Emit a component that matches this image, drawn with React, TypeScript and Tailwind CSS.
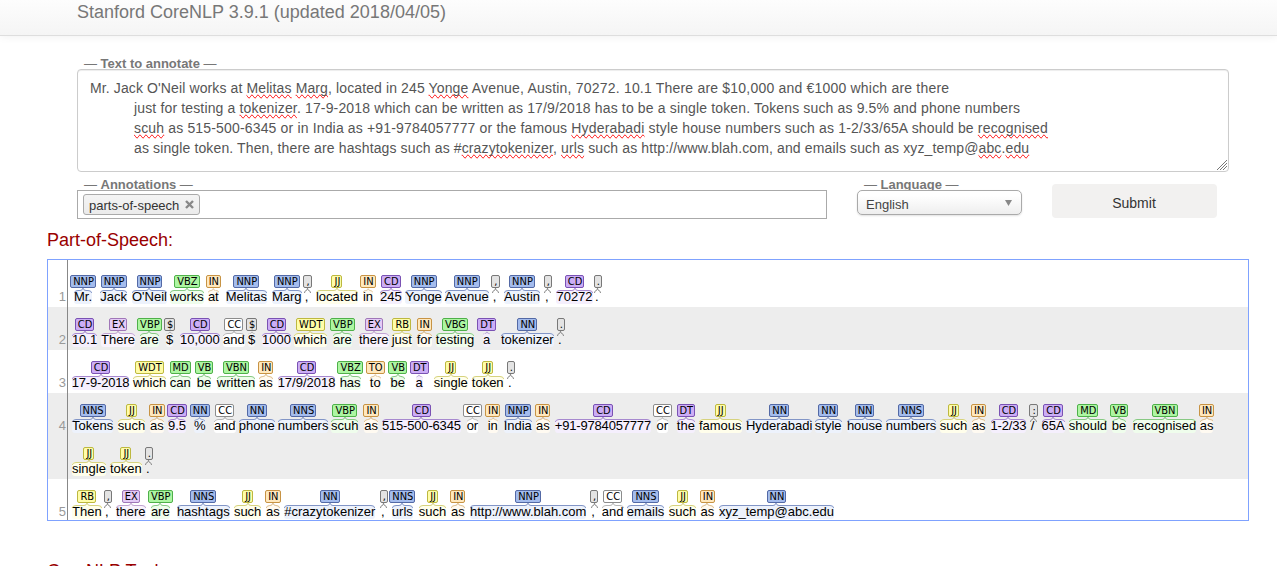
import React from 'react';

type Token = [word: string, tag: string, x: number];

const INK: Record<string, string> = {
  noun: 'bg-[#a4bced] border-[#5369a5]',
  verb: 'bg-[#adf6a2] border-[#4fb04a]',
  adj: 'bg-[#fffda8] border-[#bdb840]',
  prep: 'bg-[#ffe8be] border-[#c79344]',
  num: 'bg-[#ccadf6] border-[#7a52b3]',
  ex: 'bg-[#e4cbf6] border-[#a077b8]',
  conj: 'bg-white border-[#8c8c8c]',
  punct: 'bg-[#e3e3e3] border-[#787878]',
};

const BRACE: Record<string, string> = {
  noun: 'text-[#5f77b5]',
  verb: 'text-[#66b862]',
  adj: 'text-[#c9c45a]',
  prep: 'text-[#d0a667]',
  num: 'text-[#8d68c0]',
  ex: 'text-[#b08ac4]',
  conj: 'text-[#a0a0a0]',
  punct: 'text-[#888888]',
};

const GLOW: Record<string, string> = {
  noun: 'bg-[#edf2fc]',
  verb: 'bg-[#effdec]',
  adj: 'bg-[#fffeeb]',
  prep: 'bg-[#fffaf1]',
  num: 'bg-[#f5effd]',
  ex: 'bg-[#f9f3fd]',
  conj: 'bg-white',
  punct: 'bg-[#f7f7f7]',
};

function kind(tag: string): string {
  if (tag.startsWith('NN')) return 'noun';
  if (tag.startsWith('VB') || tag === 'MD') return 'verb';
  if (tag === 'JJ' || tag === 'RB' || tag === 'WDT') return 'adj';
  if (tag === 'IN' || tag === 'TO') return 'prep';
  if (tag === 'CD' || tag === 'DT') return 'num';
  if (tag === 'EX') return 'ex';
  if (tag === 'CC') return 'conj';
  return 'punct';
}

const LINES: { num: string; shade: boolean; first?: boolean; last?: boolean; tokens: Token[] }[] = [
  {
    num: '1', shade: false, first: true,
    tokens: [
      ['Mr.', 'NNP', 74], ['Jack', 'NNP', 100.3], ["O'Neil", 'NNP', 132], ['works', 'VBZ', 169.9], ['at', 'IN', 207.9],
      ['Melitas', 'NNP', 225.8], ['Marg', 'NNP', 272], [',', ',', 304.7], ['located', 'JJ', 316], ['in', 'IN', 363],
      ['245', 'CD', 380], ['Yonge', 'NNP', 405.5], ['Avenue', 'NNP', 444.9], [',', ',', 492.7], ['Austin', 'NNP', 504],
      [',', ',', 545], ['70272', 'CD', 556.5], ['.', '.', 595],
    ],
  },
  {
    num: '2', shade: true,
    tokens: [
      ['10.1', 'CD', 71.9], ['There', 'EX', 101], ['are', 'VBP', 140], ['$', '$', 166], ['10,000', 'CD', 180],
      ['and', 'CC', 223], ['$', '$', 248], ['1000', 'CD', 262], ['which', 'WDT', 293.7], ['are', 'VBP', 333],
      ['there', 'EX', 359], ['just', 'RB', 391.7], ['for', 'IN', 416.7], ['testing', 'VBG', 435.9], ['a', 'DT', 483],
      ['tokenizer', 'NN', 501], ['.', '.', 558],
    ],
  },
  {
    num: '3', shade: false,
    tokens: [
      ['17-9-2018', 'CD', 71.7], ['which', 'WDT', 132.9], ['can', 'MD', 169.7], ['be', 'VB', 196.9], ['written', 'VBN', 216.9],
      ['as', 'IN', 259], ['17/9/2018', 'CD', 277.7], ['has', 'VBZ', 339.7], ['to', 'TO', 369.9], ['be', 'VB', 390.5],
      ['a', 'DT', 415.7], ['single', 'JJ', 433.9], ['token', 'JJ', 471.9], ['.', '.', 508],
    ],
  },
  {
    num: '4', shade: true,
    tokens: [
      ['Tokens', 'NNS', 72], ['such', 'JJ', 117.8], ['as', 'IN', 150], ['9.5', 'CD', 168], ['%', 'NN', 193.9],
      ['and', 'CC', 213.9], ['phone', 'NN', 238.7], ['numbers', 'NNS', 277.9], ['scuh', 'VBP', 331], ['as', 'IN', 364.3],
      ['515-500-6345', 'CD', 382], ['or', 'CC', 466.7], ['in', 'IN', 487.7], ['India', 'NNP', 503.7], ['as', 'IN', 536],
      ['+91-9784057777', 'CD', 554.9], ['or', 'CC', 656.7], ['the', 'DT', 676.9], ['famous', 'JJ', 699],
      ['Hyderabadi', 'NN', 746], ['style', 'NN', 814.9], ['house', 'NN', 847], ['numbers', 'NNS', 885.9], ['such', 'JJ', 940],
      ['as', 'IN', 971.9], ['1-2/33', 'CD', 990.7], ['/', ':', 1031], ['65A', 'CD', 1041.7], ['should', 'MD', 1068.9],
      ['be', 'VB', 1111.9], ['recognised', 'VBN', 1132.9], ['as', 'IN', 1199.9],
    ],
  },
  {
    num: '', shade: true,
    tokens: [['single', 'JJ', 71.9], ['token', 'JJ', 109.9], ['.', '.', 146]],
  },
  {
    num: '5', shade: false, last: true,
    tokens: [
      ['Then', 'RB', 72], [',', ',', 105], ['there', 'EX', 115.9], ['are', 'VBP', 150.9], ['hashtags', 'NNS', 176.9],
      ['such', 'JJ', 233.9], ['as', 'IN', 266], ['#crazytokenizer', 'NN', 284.3], [',', ',', 381], ['urls', 'NNS', 391.9],
      ['such', 'JJ', 418.9], ['as', 'IN', 451], ['http://www.blah.com', 'NNP', 470], [',', ',', 591.3],
      ['and', 'CC', 601.9], ['emails', 'NNS', 626.8], ['such', 'JJ', 668.9], ['as', 'IN', 700.6], ['xyz_temp@abc.edu', 'NN', 719],
    ],
  },
];

const TEXT_LEFT = 68;

function Brace({ narrow, color }: { narrow: boolean; color: string }) {
  if (narrow) {
    return (
      <span className={`flex h-[5px] w-0 justify-center pl-[2px] ${color}`}>
        <svg className="h-[5px] w-[7px] shrink-0" viewBox="0 0 7 5" fill="none" stroke="currentColor">
          <path d="M0.5 5 Q0.5 3 2 2.6 Q3.5 2.2 3.5 0 Q3.5 2.2 5 2.6 Q6.5 3 6.5 5" />
        </svg>
      </span>
    );
  }
  return (
    <span className={`flex h-[5px] w-0 min-w-full justify-center opacity-75 ${color}`}>
      <svg className="h-[5px] w-[4px] min-w-0 shrink" viewBox="0 0 4 5" fill="none" stroke="currentColor">
        <path d="M0.3 5 Q0.8 2.5 4 2.5" />
      </svg>
      <span className="mt-[2px] h-px min-w-0 flex-1 bg-current" />
      <svg className="h-[5px] w-[6px] min-w-[4px] shrink" viewBox="0 0 6 5" fill="none" stroke="currentColor">
        <path d="M0 2.5 Q2.5 2.5 3 0 Q3.5 2.5 6 2.5" />
      </svg>
      <span className="mt-[2px] h-px min-w-0 flex-1 bg-current" />
      <svg className="h-[5px] w-[4px] min-w-0 shrink" viewBox="0 0 4 5" fill="none" stroke="currentColor">
        <path d="M0 2.5 Q3.2 2.5 3.7 5" />
      </svg>
    </span>
  );
}

function TokenView({ word, tag, width }: { word: string; tag: string; width: number }) {
  const k = kind(tag);
  const narrow = word === ',' || word === '.' || word === '/';
  return (
    <div className="flex shrink-0 justify-start" style={{ width }}>
      <div className="flex w-max flex-col items-center">
        <span className={`flex h-[13px] w-0 justify-center ${narrow ? 'pl-[2px]' : ''}`}>
          <span className={`h-[13px] shrink-0 rounded-[2px] border pr-px pl-[2px] font-['DejaVu_Sans_Condensed','DejaVu_Sans',sans-serif] text-[11px] leading-[11px] ${INK[k]}`}>
            <span className="text-black">{tag}</span>
          </span>
        </span>
        <Brace narrow={narrow} color={BRACE[k]} />
        <span className={`-mt-[3px] h-[14px] rounded-[3px] text-[13px] leading-[13px] whitespace-nowrap text-black ${word.includes('-') ? 'tracking-[-0.18px]' : ''} ${narrow ? '' : GLOW[k]}`}>{word}</span>
      </div>
    </div>
  );
}

function AnnotationLine({ line }: { line: (typeof LINES)[number] }) {
  const { tokens } = line;
  const height = line.first ? 'h-[47px] pt-[15px]' : line.last ? 'h-[41px] pt-[11px]' : 'h-[43px] pt-[11px]';
  return (
    <div className={`flex ${height} ${line.shade ? 'bg-[#ededed]' : 'bg-white'}`}>
      <div className="-mt-[15px] w-[20px] shrink-0 border-r border-[#888] pt-[30px] pr-px text-right text-[13px] leading-[13px] text-[#999]">
        {line.num}
      </div>
      <div className="flex" style={{ marginLeft: tokens[0][2] - TEXT_LEFT }}>
        {tokens.map(([word, tag, x], i) => (
          <TokenView key={i} word={word} tag={tag} width={(i + 1 < tokens.length ? tokens[i + 1][2] : x + 40) - x} />
        ))}
      </div>
    </div>
  );
}

function Misspelt({ children }: { children: React.ReactNode }) {
  return <span className="[text-decoration-line:spelling-error]">{children}</span>;
}

function Legend({ children }: { children: React.ReactNode }) {
  return (
    <div className="flex h-[13px] items-start gap-[3.5px] overflow-hidden pl-[7px] text-[13px] leading-[15px] font-bold whitespace-nowrap text-[#777]">
      <span className="font-normal">—</span>
      <span>{children}</span>
      <span className="font-normal">—</span>
    </div>
  );
}

export default function App() {
  return (
    <div className="h-[566px] w-[1277px] overflow-hidden bg-white font-['Liberation_Sans',Arial,sans-serif] text-[#333]">
      <header className="h-[36px] border-b border-[#dedede] bg-linear-to-b from-[#fdfdfd] to-[#f5f5f5] pl-[77px] shadow-[0_1px_8px_rgba(0,0,0,0.06)]">
        <h1 className="pt-[2px] text-[18px] leading-[20px] text-[#777]">Stanford CoreNLP 3.9.1 (updated 2018/04/05)</h1>
      </header>

      <form className="flex flex-col pt-[20px] pl-[77px]">
        <Legend>Text to annotate</Legend>
        <div className="flex h-[103px] w-[1152px] items-end justify-between rounded-[4px] border border-[#ccc] pl-[12px] shadow-[inset_0_1px_1px_rgba(0,0,0,0.075)]">
          <div className="h-[93px] text-[14px] leading-[20px] whitespace-nowrap text-[#555]">
            <p className="w-max tracking-[0.2px]">
              <span className="tracking-[0.115px]">Mr. Jack O'Neil works at <Misspelt>Melitas</Misspelt> <Misspelt>Marg</Misspelt>, located in 245 <Misspelt>Yonge</Misspelt></span> Avenue, Austin, 70272. 10.1 There are $10,000 and €1000 which are there
            </p>
            <p className="w-max pl-[44px] tracking-[0.148px]">
              just for testing a <Misspelt>tokenizer</Misspelt>. 17-9-2018 which can be written as 17/9/2018 has to be a single token. Tokens such as 9.5% and phone numbers
            </p>
            <p className="w-max pl-[44px] tracking-[0.16px]">
              <Misspelt>scuh</Misspelt> as 515-500-6345 or in India as +91-9784057777 or the famous <Misspelt>Hyderabadi</Misspelt> style house numbers such as 1-2/33/65A should be <Misspelt>recognised</Misspelt>
            </p>
            <p className="w-max pl-[44px] tracking-[0.128px]">
              as single token. Then, there are hashtags such as #<Misspelt>crazytokenizer</Misspelt>, <Misspelt>urls</Misspelt> such as http://www.blah.com, and emails such as xyz_temp@<Misspelt>abc</Misspelt>.<Misspelt>edu</Misspelt>
            </p>
          </div>
          <svg className="mr-px mb-px h-[10px] w-[10px]" viewBox="0 0 10 10" fill="none" stroke="#777">
            <path d="M0 10 L10 0 M3 10 L10 3 M6 10 L10 6" />
          </svg>
        </div>

        <div className="flex pt-[5px]">
          <div className="w-[750px]">
            <Legend>Annotations</Legend>
            <div className="flex h-[29px] items-start border border-[#aaa] pt-[3px] pl-[5px]">
              <div className="flex h-[21px] items-center gap-[6px] rounded-[3px] border border-[#aaa] bg-linear-to-b from-[#f4f4f4] to-[#ebebeb] pr-[5px] pl-[5px] text-[13px] leading-[13px] text-[#333]">
                <span className="pt-[2px]">parts-of-speech</span>
                <svg className="h-[9px] w-[9px]" viewBox="0 0 9 9" stroke="#888" strokeWidth="2.4">
                  <path d="M1 1 L8 8 M8 1 L1 8" />
                </svg>
              </div>
            </div>
          </div>
          <div className="ml-[30px] w-[165px]">
            <Legend>Language</Legend>
            <div className="flex h-[25px] items-center justify-between rounded-[5px] border border-[#aaa] bg-linear-to-b from-white from-20% to-[#eee] pr-[9px] pl-[8px] text-[13px] text-[#444] shadow-[0_1px_2px_rgba(0,0,0,0.12)]">
              <span className="pt-[4px]">English</span>
              <svg className="h-[6px] w-[7px]" viewBox="0 0 8 6" preserveAspectRatio="none" fill="#888">
                <path d="M0 0 H8 L4 6 Z" />
              </svg>
            </div>
          </div>
          <button type="button" className="mt-[7px] ml-[30px] h-[34px] w-[165px] rounded-[4px] bg-[#f2f1f0] pt-[4px] pr-px text-[14px] leading-[20px] text-[#333]">
            Submit
          </button>
        </div>
      </form>

      <section className="pt-[10px] pl-[47px]">
        <h2 className="text-[18px] leading-[22px] text-[#990000]">Part-of-Speech:</h2>
        <div className="mt-[8px] h-[262px] w-[1202px] overflow-hidden border border-[#7fa2ff]">
          {LINES.map((line, i) => (
            <AnnotationLine key={i} line={line} />
          ))}
        </div>
        <h2 className="mt-[39px] text-[18px] leading-[22px] text-[#990000]">CoreNLP Tools:</h2>
      </section>
    </div>
  );
}
